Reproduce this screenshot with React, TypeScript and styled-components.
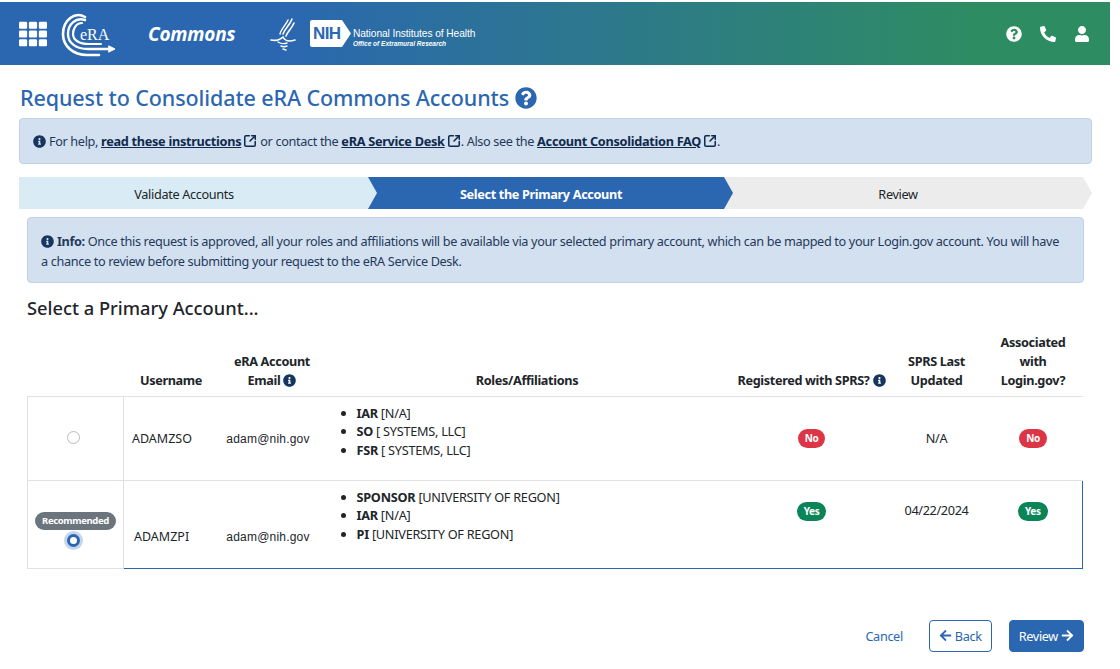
import React from 'react';
import styled, { createGlobalStyle } from 'styled-components';
import { FaArrowLeft, FaArrowRight, FaInfoCircle, FaPhoneAlt, FaQuestionCircle, FaTh, FaUser } from 'react-icons/fa';
import { SquareArrowOutUpRight } from 'lucide-react';

const GlobalStyle = createGlobalStyle`
  html, body {
    margin: 0;
    padding: 0;
    background: #fff;
  }
  body {
    font-family: "Noto Sans", "Open Sans", sans-serif;
    font-size: 12.7px;
    letter-spacing: -0.35px;
    color: #212529;
  }
`;

const Page = styled.div`
  width: 1110px;
  height: 669px;
  padding-top: 2px;
  box-sizing: border-box;
  overflow: hidden;
`;

const Header = styled.header`
  height: 63px;
  display: flex;
  align-items: center;
  padding: 0 19px;
  box-sizing: border-box;
  color: #fff;
  letter-spacing: 0;
  background: linear-gradient(90deg, #2b67b1 0%, #2b67b1 25%, #2e8c62 88%, #2e8c62 100%);
`;

const EraLogo = styled.svg`
  width: 56px;
  height: 46px;
  margin-left: 14px;
  flex: none;
`;

const Commons = styled.div`
  margin-left: 31px;
  width: 122px;
  font: italic 700 19px "Open Sans", sans-serif;
  letter-spacing: -0.2px;
`;

const EagleLogo = styled.svg`
  width: 26px;
  height: 34px;
  flex: none;
`;

const NihBadge = styled.div`
  margin-left: 14px;
  width: 41px;
  height: 27px;
  flex: none;
  background: #fff;
  color: #2b67b1;
  clip-path: polygon(0 0, 78% 0, 100% 50%, 78% 100%, 0 100%);
  border-radius: 2px;
  font: 700 17px/27px "Liberation Sans", sans-serif;
  letter-spacing: -0.6px;
  padding-left: 3px;
  box-sizing: border-box;
`;

const NihText = styled.div`
  margin: 8px 0 0 2px;
  font-family: "Liberation Sans", sans-serif;
`;

const NihName = styled.div`
  font-size: 10.2px;
  line-height: 12px;
  letter-spacing: -0.08px;
`;

const NihOffice = styled.div`
  font-size: 6.5px;
  line-height: 8px;
  font-style: italic;
  font-weight: 700;
`;

const HeaderIcons = styled.div`
  margin-left: auto;
  margin-right: 1px;
  display: flex;
  align-items: center;
  gap: 18px;
  font-size: 16px;
`;

const Main = styled.main`
  padding: 0 18px 0 19px;
`;

const Title = styled.h1`
  margin: 19px 0 6px 1px;
  font-size: 21.5px;
  line-height: 28px;
  font-weight: 500;
  letter-spacing: -0.1px;
  color: #2b67b1;
  display: flex;
  align-items: center;
  gap: 6px;
`;

const Alert = styled.div`
  background: #d3e0ef;
  border: 1px solid #bfd2e8;
  border-radius: 4px;
  box-sizing: border-box;
  color: #1f3a5c;
`;

const HelpAlert = styled(Alert)`
  height: 46px;
  padding: 0 13px;
  display: flex;
  align-items: center;
  white-space: pre;
`;

const InfoAlert = styled(Alert)`
  margin: 8px 8px 0;
  height: 66px;
  padding: 13px 14px 13px 13px;
  line-height: 20px;
`;

const InfoIcon = styled(FaInfoCircle)`
  font-size: 13px;
  color: #16365f;
  vertical-align: -2px;
  flex: none;
`;

const HelpLink = styled.a`
  color: #0f2a4d;
  font-weight: 700;
  letter-spacing: -0.28px;
  text-decoration: underline;
  display: inline-flex;
  align-items: center;
  gap: 2px;
`;

const Stepper = styled.div`
  margin-top: 13px;
  display: flex;
  height: 32px;
`;

const stepShapes = {
  first: 'polygon(0 0, calc(100% - 9px) 0, 100% 50%, calc(100% - 9px) 100%, 0 100%)',
  rest: 'polygon(0 0, calc(100% - 9px) 0, 100% 50%, calc(100% - 9px) 100%, 0 100%, 9px 50%)',
};

const Step = styled.div<{ $state: 'done' | 'active' | 'todo' }>`
  width: ${(p) => (p.$state === 'done' ? 359 : p.$state === 'active' ? 366 : 368)}px;
  margin-left: ${(p) => (p.$state === 'done' ? 0 : -10)}px;
  padding: 2px ${(p) => (p.$state === 'done' ? 29 : 20)}px 0 0;
  box-sizing: border-box;
  flex: none;
  display: flex;
  align-items: center;
  justify-content: center;
  clip-path: ${(p) => (p.$state === 'done' ? stepShapes.first : stepShapes.rest)};
  background: ${(p) => (p.$state === 'done' ? '#d9ecf5' : p.$state === 'active' ? '#2b67b1' : '#ececec')};
  color: ${(p) => (p.$state === 'active' ? '#fff' : '#212529')};
  font-weight: ${(p) => (p.$state === 'active' ? 700 : 400)};
`;

const SectionTitle = styled.h2`
  margin: 13px 8px 0;
  font-size: 18.3px;
  line-height: 24px;
  font-weight: 500;
  letter-spacing: 0;
  color: #212529;
`;

const Table = styled.table`
  margin: 10px 0 0 8px;
  width: 1055px;
  table-layout: fixed;
  border-collapse: collapse;
`;

const HeadCell = styled.th<{ $indent?: number }>`
  height: 66px;
  padding: 0 0 6px ${(p) => p.$indent ?? 0}px;
  box-sizing: border-box;
  vertical-align: bottom;
  text-align: center;
  font-weight: 700;
  line-height: 19px;
  white-space: nowrap;
  color: #212529;
  border-bottom: 1px solid #dee2e6;
`;

const Row = styled.tr<{ $height: number }>`
  height: ${(p) => p.$height}px;
`;

const RadioCell = styled.td<{ $selected: boolean }>`
  padding: ${(p) => (p.$selected ? '9px 0 0' : '0 0 2px')};
  text-align: center;
  border: 1px solid #dee2e6;
`;

const Cell = styled.td<{ $selected?: boolean; $top?: boolean; $low?: boolean; $last?: boolean }>`
  padding: ${(p) => (p.$top ? '20px 0 0' : p.$low ? '24px 0 0' : '0')};
  text-align: center;
  vertical-align: ${(p) => (p.$top ? 'top' : 'middle')};
  border-bottom: 1px solid ${(p) => (p.$selected ? '#2b67b1' : '#dee2e6')};
  border-right: ${(p) => (p.$selected && p.$last ? '1px solid #2b67b1' : 'none')};
`;

const Username = styled.span<{ $shift: number }>`
  display: block;
  text-align: left;
  padding-left: ${(p) => p.$shift}px;
  font-size: 12.5px;
  letter-spacing: 0;
`;

const Email = styled.span`
  font-family: "Liberation Sans", sans-serif;
  font-size: 12px;
  letter-spacing: 0.2px;
`;

const RoleList = styled.ul`
  margin: 0;
  padding: 0 0 0 36px;
  text-align: left;
  line-height: 18.7px;
  letter-spacing: -0.25px;
`;

const RoleCell = styled(Cell)`
  vertical-align: top;
  padding-top: 7px;
`;

const Pill = styled.span<{ $yes: boolean }>`
  display: inline-block;
  padding: 0 7px;
  height: 19px;
  line-height: 19px;
  border-radius: 10px;
  font-size: 10px;
  font-weight: 700;
  color: #fff;
  background: ${(p) => (p.$yes ? '#0b8457' : '#dc3545')};
`;

const Recommended = styled.span`
  display: inline-block;
  padding: 0 7px;
  height: 18px;
  line-height: 18px;
  border-radius: 9px;
  font-size: 9.5px;
  font-weight: 700;
  color: #fff;
  background: #6c757d;
`;

const Radio = styled.input`
  appearance: none;
  display: block;
  margin: 0 auto;
  width: 13px;
  height: 13px;
  box-sizing: border-box;
  border-radius: 50%;
  border: 1px solid #bbb;
  background: #fff;
  transform: translateX(-2px);

  &:checked {
    margin-top: 4px;
    border: 3.5px solid #2b67b1;
    box-shadow: 0 0 0 3px #c6d6ea;
  }
`;

const Footer = styled.div`
  margin: 51px 8px 0 0;
  display: flex;
  align-items: center;
  justify-content: flex-end;
`;

const CancelLink = styled.a`
  color: #2b67b1;
  margin-right: 26px;
`;

const Button = styled.button<{ $primary?: boolean }>`
  height: 32px;
  padding: 0 9px;
  box-sizing: border-box;
  margin-left: ${(p) => (p.$primary ? 17 : 0)}px;
  display: flex;
  align-items: center;
  gap: 3px;
  font: inherit;
  letter-spacing: inherit;
  border: 1px solid #2b67b1;
  border-radius: 4px;
  color: ${(p) => (p.$primary ? '#fff' : '#2b67b1')};
  background: ${(p) => (p.$primary ? '#2b67b1' : '#fff')};
`;

const columns = [96, 92, 105, 413, 156, 94, 99];

const accounts = [
  {
    username: 'ADAMZSO',
    shift: 8,
    roles: [
      ['IAR', '[N/A]'],
      ['SO', '[ SYSTEMS, LLC]'],
      ['FSR', '[ SYSTEMS, LLC]'],
    ],
    registered: false,
    updated: 'N/A',
    login: false,
    selected: false,
    height: 84,
  },
  {
    username: 'ADAMZPI',
    shift: 10,
    roles: [
      ['SPONSOR', '[UNIVERSITY OF REGON]'],
      ['IAR', '[N/A]'],
      ['PI', '[UNIVERSITY OF REGON]'],
    ],
    registered: true,
    updated: '04/22/2024',
    login: true,
    selected: true,
    height: 88,
  },
];

const ExternalIcon = () => <SquareArrowOutUpRight size={14} strokeWidth={2.6} />;

export default function App() {
  return (
    <Page>
      <GlobalStyle />
      <Header>
        <FaTh size={28} />
        <EraLogo viewBox="0 0 56 46" fill="none" stroke="#fff" strokeLinecap="round">
          <path d="M24 6 C14 0 2 9 2 23 C2 35 12 44 26 44 L38 44" strokeWidth="2.6" />
          <path d="M24 9 C15 6 7 13 7 23 C7 32 15 38 27 38 L50 38" strokeWidth="2.4" />
          <path d="M21 12 C15 12 12 18 12 23 C12 29 18 33 28 33 L40 33" strokeWidth="2.2" />
          <path d="M48 35 L54 38 L48 41 Z" fill="#fff" strokeWidth="1" />
          <text x="19" y="29" fill="#fff" stroke="none" fontFamily="Liberation Serif, serif" fontSize="16">
            eRA
          </text>
        </EraLogo>
        <Commons>Commons</Commons>
        <EagleLogo viewBox="0 0 26 34" fill="none" stroke="#fff" strokeLinecap="round">
          <path d="M22 2 C20 8 15 11 13 17" strokeWidth="1.6" />
          <path d="M24 6 C22 11 18 14 16 19" strokeWidth="1.6" />
          <path d="M18 3 C16 8 11 12 10 17" strokeWidth="1.4" />
          <path d="M1 23 C6 24 10 23 13 20 C15 24 19 25 25 23" strokeWidth="1.6" />
          <path d="M8 25 C11 27 14 27 17 26 M11 29 C13 30 15 30 17 29 M13 32 L16 33" strokeWidth="1.4" />
        </EagleLogo>
        <NihBadge>NIH</NihBadge>
        <NihText>
          <NihName>National Institutes of Health</NihName>
          <NihOffice>Office of Extramural Research</NihOffice>
        </NihText>
        <HeaderIcons>
          <FaQuestionCircle />
          <FaPhoneAlt />
          <FaUser />
        </HeaderIcons>
      </Header>
      <Main>
        <Title>
          Request to Consolidate eRA Commons Accounts
          <FaQuestionCircle size={22} />
        </Title>
        <HelpAlert>
          <InfoIcon />
          {' For help, '}
          <HelpLink>
            read these instructions
            <ExternalIcon />
          </HelpLink>
          {' or contact the '}
          <HelpLink>
            eRA Service Desk
            <ExternalIcon />
          </HelpLink>
          {'. Also see the '}
          <HelpLink>
            Account Consolidation FAQ
            <ExternalIcon />
          </HelpLink>
          .
        </HelpAlert>
        <Stepper>
          <Step $state="done">Validate Accounts</Step>
          <Step $state="active">Select the Primary Account</Step>
          <Step $state="todo">Review</Step>
        </Stepper>
        <InfoAlert>
          <InfoIcon /> <b>Info:</b> Once this request is approved, all your roles and affiliations will be available
          via your selected primary account, which can be mapped to your Login.gov account. You will have
          <br />a chance to review before submitting your request to the eRA Service Desk.
        </InfoAlert>
        <SectionTitle>Select a Primary Account...</SectionTitle>
        <Table>
          <colgroup>
            {columns.map((w, i) => (
              <col key={i} width={w} />
            ))}
          </colgroup>
          <thead>
            <tr>
              <HeadCell />
              <HeadCell $indent={3}>Username</HeadCell>
              <HeadCell $indent={8}>
                eRA Account
                <br />
                Email <InfoIcon />
              </HeadCell>
              <HeadCell>Roles/Affiliations</HeadCell>
              <HeadCell>
                Registered with SPRS? <InfoIcon />
              </HeadCell>
              <HeadCell>
                SPRS Last
                <br />
                Updated
              </HeadCell>
              <HeadCell>
                Associated
                <br />
                with
                <br />
                Login.gov?
              </HeadCell>
            </tr>
          </thead>
          <tbody>
            {accounts.map((a) => (
              <Row key={a.username} $height={a.height}>
                <RadioCell $selected={a.selected}>
                  {a.selected && <Recommended>Recommended</Recommended>}
                  <Radio type="radio" name="primary" defaultChecked={a.selected} />
                </RadioCell>
                <Cell $selected={a.selected} $low={a.selected}>
                  <Username $shift={a.shift}>{a.username}</Username>
                </Cell>
                <Cell $selected={a.selected} $low={a.selected}>
                  <Email>adam@nih.gov</Email>
                </Cell>
                <RoleCell $selected={a.selected}>
                  <RoleList>
                    {a.roles.map(([role, org]) => (
                      <li key={role}>
                        <b>{role}</b> {org}
                      </li>
                    ))}
                  </RoleList>
                </RoleCell>
                <Cell $selected={a.selected} $top={a.selected}>
                  <Pill $yes={a.registered}>{a.registered ? 'Yes' : 'No'}</Pill>
                </Cell>
                <Cell $selected={a.selected} $top={a.selected}>
                  {a.updated}
                </Cell>
                <Cell $selected={a.selected} $top={a.selected} $last>
                  <Pill $yes={a.login}>{a.login ? 'Yes' : 'No'}</Pill>
                </Cell>
              </Row>
            ))}
          </tbody>
        </Table>
        <Footer>
          <CancelLink>Cancel</CancelLink>
          <Button>
            <FaArrowLeft size={13} />
            Back
          </Button>
          <Button $primary>
            Review
            <FaArrowRight size={13} />
          </Button>
        </Footer>
      </Main>
    </Page>
  );
}
